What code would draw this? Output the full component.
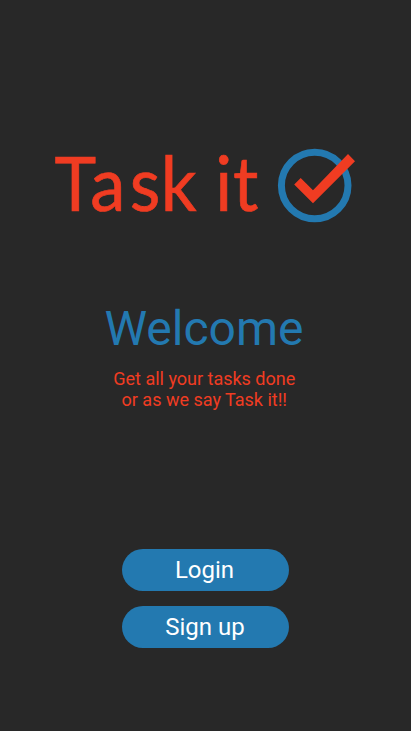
<main>
  <header class="logo">
    <svg width="306" height="80" viewBox="54 147 306 80" role="img" aria-label="Task it">
      <text class="brand" y="211" transform="scale(.93 1)" x="58.6 97 139.6 172.8 212 231.5 250.5">Task it</text>
      <circle cx="314.7" cy="185.5" r="33.3" fill="none" stroke="#2379b0" stroke-width="7" />
      <path d="M294.2 184.5 L300.7 178 L313 190.3 L348 154 L355 161.2 L313 203.2 Z" fill="#f03c22" />
    </svg>
  </header>
  <section>
    <h2>Welcome</h2>
    <p>Get all your tasks done<br />or as we say Task it!!</p>
  </section>
  <nav>
    <button>Login</button>
    <button class="signup">Sign up</button>
  </nav>
</main>

<style>
  :global(body) { margin: 0; background: #282828; }
  main { box-sizing: border-box; width: 411px; height: 731px; padding-top: 147px; background: #282828; font-family: Roboto, sans-serif; overflow: hidden; }
  .logo { display: flex; height: 76px; padding-left: 54px; }
  svg { display: block; flex: none; overflow: visible; }
  .brand { font: 400 76px Lato, sans-serif; fill: #f03c22; stroke: #f03c22; stroke-width: 0.7px; white-space: pre; }
  section { text-align: center; padding-top: 78px; width: 408px; }
  h2 { margin: 0; font-size: 48px; line-height: 56px; font-weight: 400; color: #2379b0; }
  p { margin: 11px 0 0; padding-left: 0.5px; font-size: 18px; line-height: 21px; color: #f03c22; }
  nav { display: flex; flex-direction: column; align-items: center; gap: 15px; padding-top: 139px; }
  button { width: 167px; height: 42px; border: 0; border-radius: 21px; padding: 0 2px 0 0; background: #2379b0; color: #fff; font: 400 24px/28px Roboto, sans-serif; }
  .signup { padding-right: 1px; }
</style>
